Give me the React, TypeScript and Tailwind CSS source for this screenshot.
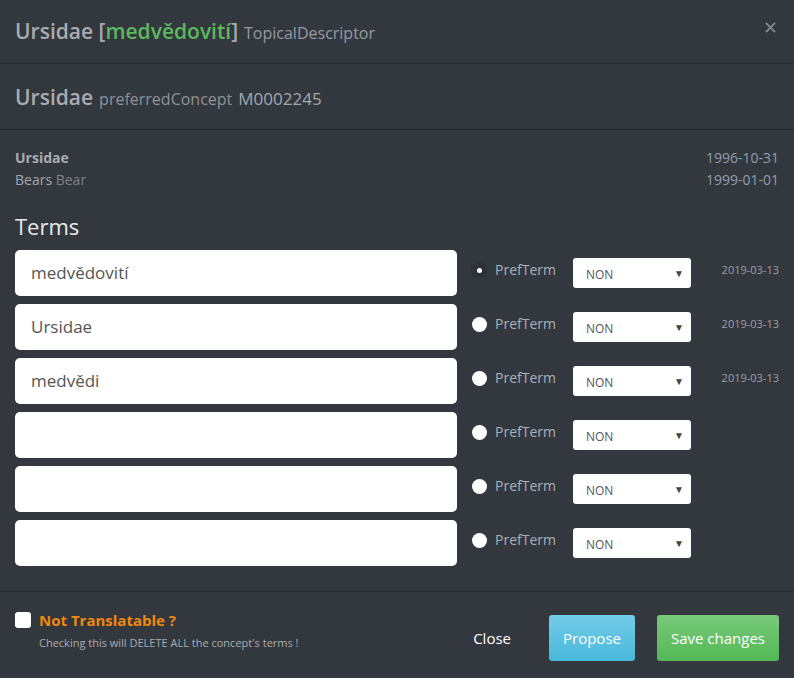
const terms = [
  { value: "medvědovití", pref: true, date: "2019-03-13" },
  { value: "Ursidae", pref: false, date: "2019-03-13" },
  { value: "medvědi", pref: false, date: "2019-03-13" },
  { value: "", pref: false, date: "" },
  { value: "", pref: false, date: "" },
  { value: "", pref: false, date: "" },
];

const TermRow = ({ value, pref, date }: { value: string; pref: boolean; date: string }) => {
  return (
    <div className="flex items-center h-[46px]">
      <div className="w-[442px] h-[46px] bg-white rounded-[5px] flex items-center px-[16px] text-[17px] text-[#555]">
        {value}
      </div>
      <div className="ml-[14px] w-[16px] flex justify-center -mt-[6px]">
        {pref ? (
          <div className="w-[16px] h-[16px] rounded-full bg-[#2e3238] flex items-center justify-center">
            <div className="w-[5px] h-[5px] rounded-full bg-white"></div>
          </div>
        ) : (
          <div className="w-[15px] h-[15px] rounded-full bg-white"></div>
        )}
      </div>
      <div className="ml-[8px] w-[78px] text-[14px] text-[#aab2bb] -mt-[8px]">PrefTerm</div>
      <div className="w-[118px] h-[30px] bg-white rounded-[3px] flex items-center justify-between pl-[13px] pr-[7px] text-[12px] text-[#555]">
        <span className="mt-[3px]">NON</span>
        <span className="text-[10px] text-[#444]">▼</span>
      </div>
      <div className="flex-1 text-right text-[11px] text-[#9aa1a8] -mt-[6px]">{date}</div>
    </div>
  );
};

export default function App() {
  return (
    <div
      className="w-[794px] h-[678px] bg-[#33373e] overflow-hidden"
      style={{ fontFamily: '"Open Sans", "Noto Sans", sans-serif' }}
    >
      <div className="h-[64px] px-[15px] flex items-center justify-between border-b border-[#272a2e]">
        <div className="flex items-baseline gap-[6px]">
          <span className="text-[21px] font-semibold text-[#a9adb1]">
            Ursidae [<span className="text-[#5cb85c]">medvědovití</span>]
          </span>
          <span className="text-[16px] text-[#969ba0]">TopicalDescriptor</span>
        </div>
        <svg width="11" height="11" viewBox="0 0 12 12" className="mr-[3px] -mt-[8px]">
          <path d="M1 1 L11 11 M11 1 L1 11" stroke="#8a8f95" strokeWidth="1.8" />
        </svg>
      </div>

      <div className="h-[66px] px-[15px] flex items-center border-b border-[#272a2e]">
        <div className="flex items-baseline gap-[6px] mt-[2px]">
          <span className="text-[21px] font-semibold text-[#a9adb1]">Ursidae</span>
          <span className="text-[16px] text-[#8e9398]">preferredConcept</span>
          <span className="text-[17px] text-[#a3a8ad]">M0002245</span>
        </div>
      </div>

      <div className="px-[15px] pt-[17px] flex justify-between text-[14px]">
        <div className="leading-[22px]">
          <div className="font-bold text-[#a9adb1]">Ursidae</div>
          <div className="text-[#a3a8ad]">
            Bears <span className="text-[#7d8287]">Bear</span>
          </div>
        </div>
        <div className="leading-[22px] text-right text-[#8fa0ab]">
          <div>1996-10-31</div>
          <div>1999-01-01</div>
        </div>
      </div>

      <div className="px-[15px] pt-[20px] text-[22px] text-[#e8eaec] leading-[30px]">Terms</div>

      <div className="px-[15px] pt-[9px] pb-[25px] flex flex-col gap-[8px] border-b border-[#272a2e]">
        {terms.map((t, i) => (
          <TermRow key={i} {...t} />
        ))}
      </div>

      <div className="px-[15px] pt-[17px] flex items-start">
        <div className="flex-1">
          <div className="flex items-center gap-[8px]">
            <div className="w-[16px] h-[16px] bg-white rounded-[3px]"></div>
            <span className="text-[15px] font-bold text-[#f0890d]">Not Translatable ?</span>
          </div>
          <div className="pl-[24px] pt-[3px] text-[11px] text-[#a9adb1]">
            Checking this will DELETE ALL the concept's terms !
          </div>
        </div>
        <div className="flex items-center gap-[22px] pt-[6px]">
          <span className="text-[15px] text-white mr-[16px] ml-[2px]">Close</span>
          <div className="w-[86px] h-[46px] rounded-[3px] bg-gradient-to-b from-[#72cbe6] to-[#48b8db] flex items-center justify-center text-[15px] text-white">
            Propose
          </div>
          <div className="w-[122px] h-[46px] rounded-[3px] bg-gradient-to-b from-[#78c97a] to-[#53b855] flex items-center justify-center text-[15px] text-white">
            Save changes
          </div>
        </div>
      </div>
    </div>
  );
}
